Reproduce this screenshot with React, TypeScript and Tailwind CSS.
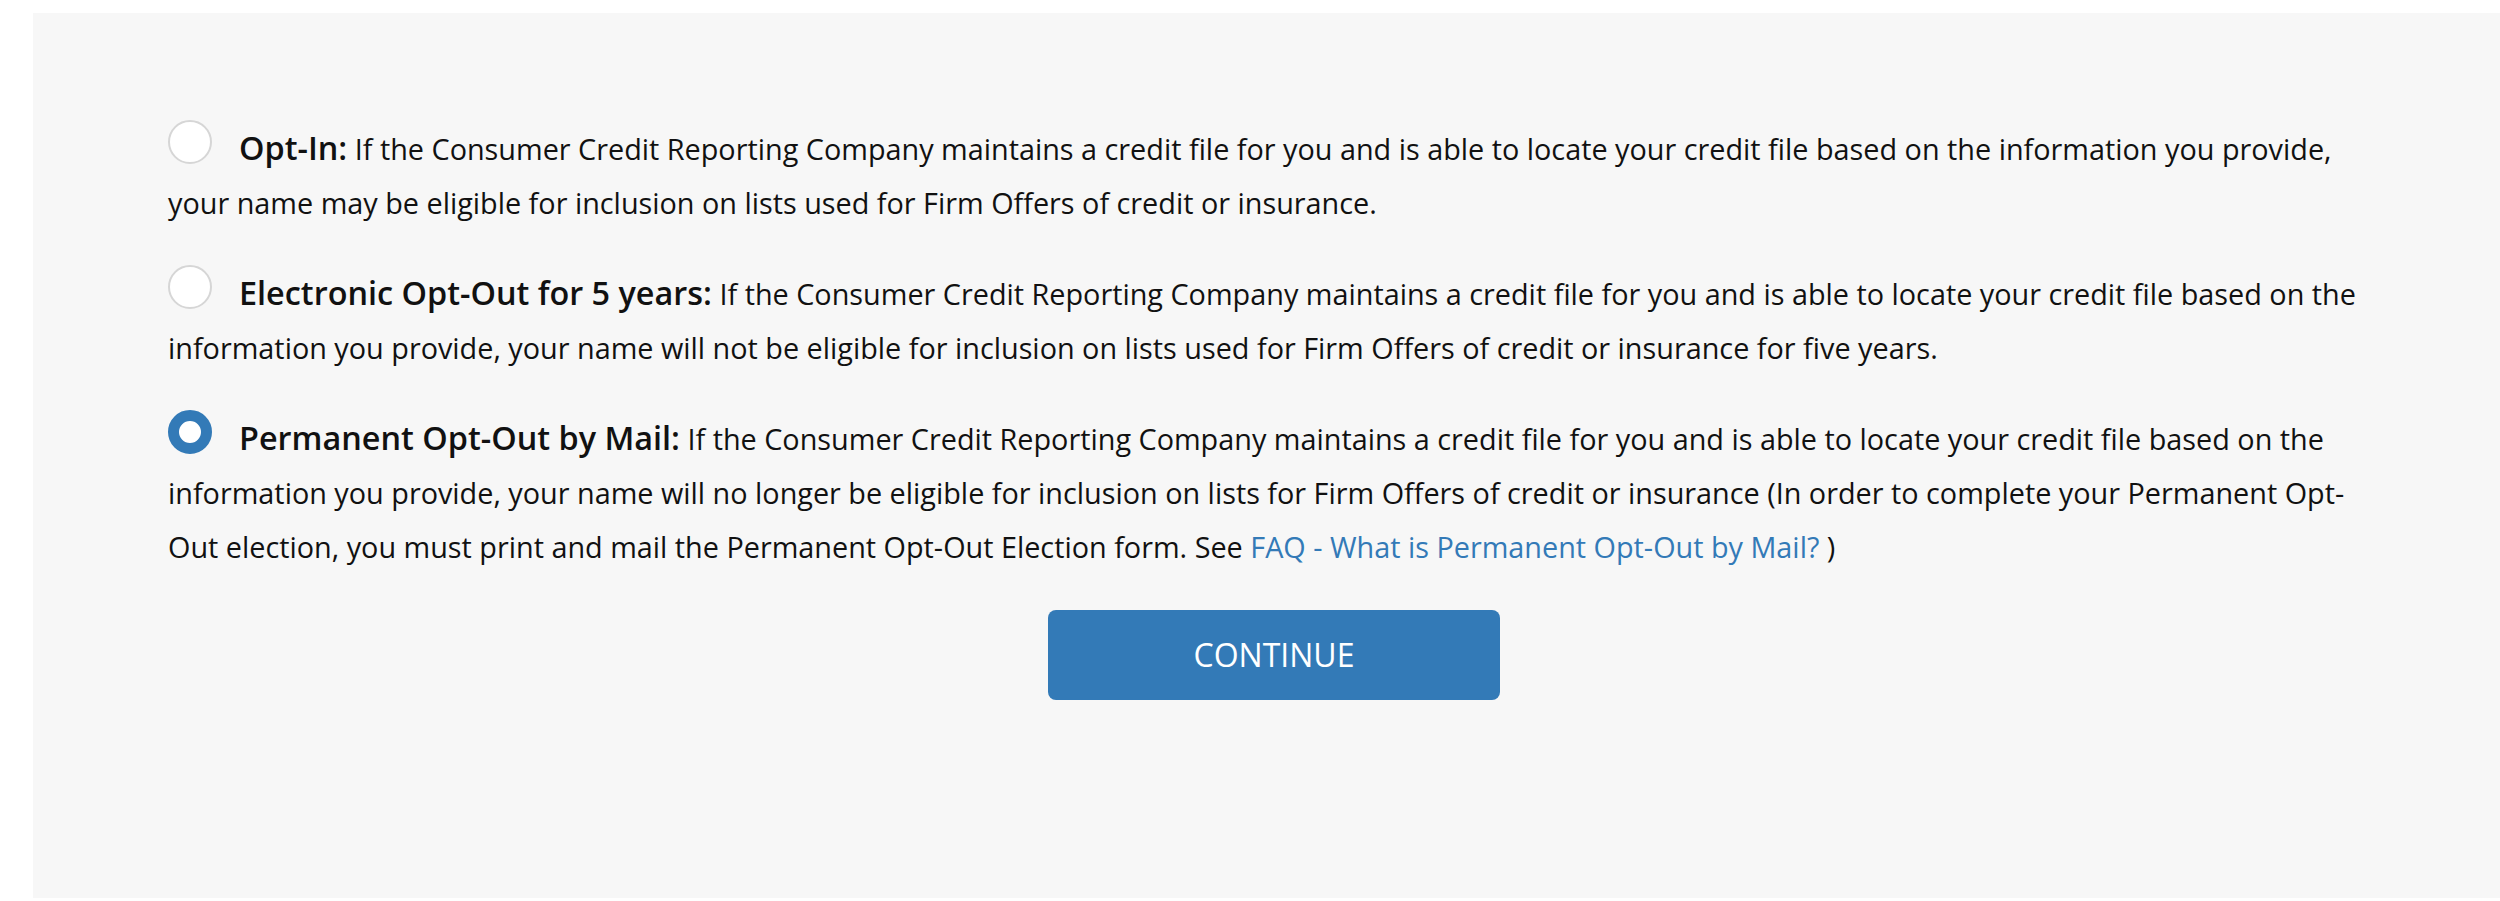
import React from "react";

function Radio({ checked }: { checked?: boolean }) {
  return checked ? (
    <span className="mr-[27px] inline-block h-[44px] w-[44px] rounded-full border-[11px] border-[#337ab7] bg-white align-top" />
  ) : (
    <span className="mr-[27px] inline-block h-[44px] w-[44px] rounded-full border-2 border-[#d6d6d6] bg-white align-top" />
  );
}

function Label({ children }: { children: React.ReactNode }) {
  return <b className="text-[32.4px] font-semibold">{children}</b>;
}

export default function App() {
  return (
    <div className="min-h-[901px] bg-white pt-[13px] pl-[33px]" style={{ fontFamily: '"Open Sans", "Noto Sans", sans-serif' }}>
      <div className="flex h-[885px] flex-col gap-[35px] bg-[#f7f7f7] pt-[107px] pl-[135px] pr-[120px] text-[28.8px] leading-[54.4px] text-[#111]">
        <div className="flex flex-col gap-[34px]">
          <p>
            <Radio />
            <Label>Opt-In:</Label> If the Consumer Credit Reporting Company maintains a credit file for you and is able to locate your credit file based on the information you provide, your name may be eligible for inclusion on lists used for Firm Offers of credit or insurance.
          </p>
          <p>
            <Radio />
            <Label>Electronic Opt-Out for 5 years:</Label> If the Consumer Credit Reporting Company maintains a credit file for you and is able to locate your credit file based on the information you provide, your name will not be eligible for inclusion on lists used for Firm Offers of credit or insurance for five years.
          </p>
          <p>
            <Radio checked />
            <Label>Permanent Opt-Out by Mail:</Label> If the Consumer Credit Reporting Company maintains a credit file for you and is able to locate your credit file based on the information you provide, your name will no longer be eligible for inclusion on lists for Firm Offers of credit or insurance (In order to complete your Permanent Opt-Out election, you must print and mail the Permanent Opt-Out Election form. See{" "}
            <a className="text-[#337ab7]" href="#">FAQ - What is Permanent Opt-Out by Mail?</a> )
          </p>
        </div>
        <div className="flex justify-center">
          <button className="h-[90px] w-[452px] rounded-[8px] bg-[#337ab7] text-[32px] text-white">CONTINUE</button>
        </div>
      </div>
    </div>
  );
}
